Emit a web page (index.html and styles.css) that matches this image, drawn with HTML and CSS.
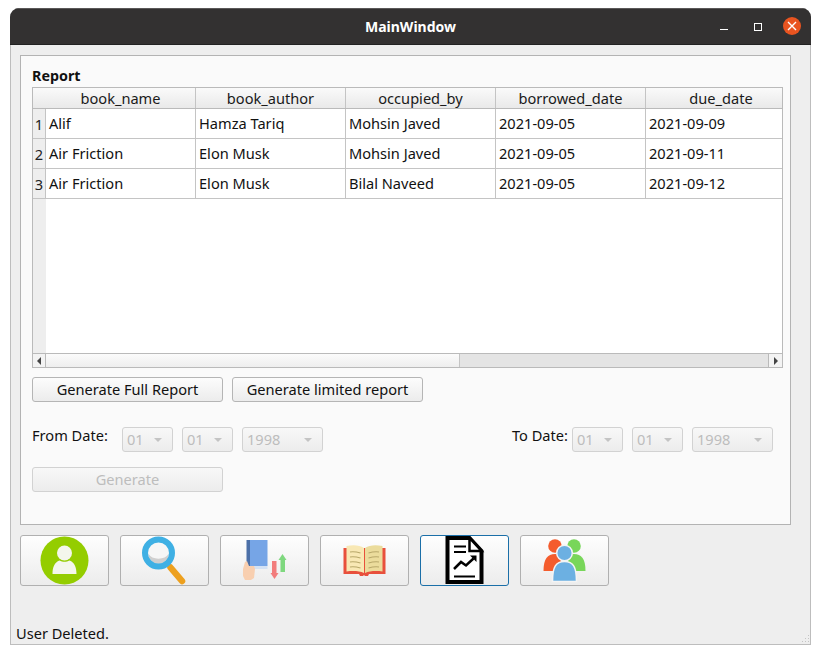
FILE: index.html
```html
<!DOCTYPE html>
<html lang="en">
<head>
<meta charset="utf-8">
<title>MainWindow</title>
<link rel="stylesheet" href="styles.css">
</head>
<body>
<div class="window">
  <header class="titlebar">
    <span class="title">MainWindow</span>
    <div class="controls">
      <span class="ctl-min"></span>
      <span class="ctl-max"></span>
      <span class="ctl-close"><svg width="10" height="10" viewBox="0 0 10 10"><path d="M1 1L9 9M9 1L1 9" stroke="#fff" stroke-width="1.4" fill="none"/></svg></span>
    </div>
  </header>
  <main class="content">
    <section class="panel">
      <div class="panel-title">Report</div>
      <div class="table">
        <div class="thead">
          <div class="corner"></div>
          <div class="th w150">book_name</div>
          <div class="th w150">book_author</div>
          <div class="th w150">occupied_by</div>
          <div class="th w150">borrowed_date</div>
          <div class="th w150 th-last">due_date</div>
        </div>
        <div class="tbody">
          <div class="row">
            <div class="rh">1</div>
            <div class="td w150">Alif</div>
            <div class="td w150">Hamza Tariq</div>
            <div class="td w150">Mohsin Javed</div>
            <div class="td w150">2021-09-05</div>
            <div class="td wlast">2021-09-09</div>
          </div>
          <div class="row">
            <div class="rh">2</div>
            <div class="td w150">Air Friction</div>
            <div class="td w150">Elon Musk</div>
            <div class="td w150">Mohsin Javed</div>
            <div class="td w150">2021-09-05</div>
            <div class="td wlast">2021-09-11</div>
          </div>
          <div class="row">
            <div class="rh">3</div>
            <div class="td w150">Air Friction</div>
            <div class="td w150">Elon Musk</div>
            <div class="td w150">Bilal Naveed</div>
            <div class="td w150">2021-09-05</div>
            <div class="td wlast">2021-09-12</div>
          </div>
          <div class="empty"><div class="rh-fill"></div></div>
        </div>
        <div class="hscroll">
          <div class="sb-btn"><span class="arrow-left"></span></div>
          <div class="sb-thumb"></div>
          <div class="sb-trough"></div>
          <div class="sb-btn sb-btn-right"><span class="arrow-right"></span></div>
        </div>
      </div>
      <div class="actions">
        <button class="btn">Generate Full Report</button>
        <button class="btn">Generate limited report</button>
      </div>
      <div class="dates">
        <div class="date-group">
          <span class="date-label from-label">From Date:</span>
          <div class="combo c51"><span>01</span><i></i></div>
          <div class="combo c51"><span>01</span><i></i></div>
          <div class="combo c81"><span>1998</span><i></i></div>
        </div>
        <div class="date-group">
          <span class="date-label to-label">To Date:</span>
          <div class="combo c51"><span>01</span><i></i></div>
          <div class="combo c51"><span>01</span><i></i></div>
          <div class="combo c81"><span>1998</span><i></i></div>
        </div>
      </div>
      <button class="btn btn-disabled" disabled>Generate</button>
    </section>
    <nav class="toolbar">
      <button class="tool" aria-label="Users">
        <svg width="50" height="50" viewBox="0 0 50 50"><circle cx="24.500" cy="24.500" r="24" fill="#94cd00"/><circle cx="24.500" cy="17" r="7.500" fill="#f4f6ec"/><path d="M12.500 38c0-7 2-11.500 7-13.500 3 1.800 7 1.800 10 0 5 2 7 6.500 7 13.500z" fill="#f4f6ec"/></svg>
      </button>
      <button class="tool" aria-label="Search">
        <svg width="50" height="50" viewBox="0 0 50 50"><path d="M30.500 31.500l11.500 13.500" stroke="#eda01e" stroke-width="6.500" stroke-linecap="round" fill="none"/><circle cx="18.500" cy="17" r="12" fill="#f6f6f6"/><path d="M8.500 18a10 10 0 0 0 20 0a11 8 0 0 1-20 0z" fill="#cfcfcf"/><circle cx="18.500" cy="17" r="13.500" fill="none" stroke="#3fb0e4" stroke-width="6"/></svg>
      </button>
      <button class="tool" aria-label="Borrow and return">
        <svg width="50" height="50" viewBox="0 0 50 50"><rect x="6.500" y="4" width="4" height="28" fill="#4c70a8"/><rect x="10" y="4" width="17.500" height="26" fill="#76a5e6"/><rect x="11" y="30" width="16.500" height="3" fill="#d4e2f4"/><path d="M3 33l2-7 2-1 2 5h5l1 3-1 9-3 2H5l-2-4z" fill="#f8cfb0"/><rect x="32" y="25" width="4.500" height="13" fill="#f27c7c"/><path d="M30.500 37h8l-4 6z" fill="#f27c7c"/><rect x="40.500" y="23" width="4.500" height="13" fill="#7fd87f"/><path d="M38.500 24h8l-4-6z" fill="#7fd87f"/></svg>
      </button>
      <button class="tool" aria-label="Books">
        <svg width="50" height="50" viewBox="0 0 50 50"><path d="M3.500 12h42v26H29l-1 2h-3l-1-1-1 1h-3l-1-2H3.500z" fill="#e8503c"/><path d="M6.500 10c7-1.500 13-1 17.500 2v25c-4.500-2-11-2.500-17.500-1.500z" fill="#f8e8b4"/><path d="M42.500 10c-7-1.500-13-1-17.500 2v25c4.500-2 11-2.500 17.500-1.500z" fill="#ebdc9c"/><path d="M10 16c3.500-.5 7 0 10.500 1M10 21c3.500-.5 7 0 10.500 1M10 26c3.500-.5 7 0 10.500 1M10 31c3.500-.5 7 0 10.500 1M39 16c-3.500-.5-7 0-10.500 1M39 21c-3.500-.5-7 0-10.500 1M39 26c-3.500-.5-7 0-10.500 1M39 31c-3.500-.5-7 0-10.500 1" stroke="#b8a86a" stroke-width="1.100" fill="none"/></svg>
      </button>
      <button class="tool tool-active" aria-label="Report">
        <svg width="50" height="50" viewBox="0 0 50 50"><path d="M7.500 2h22l12 13v31h-34z" fill="#fff" stroke="#000" stroke-width="4"/><path d="M29.500 2v13h12z" fill="#fff" stroke="#000" stroke-width="2.500"/><path d="M14 10.500h12M14 16h12M14 40.500h21" stroke="#000" stroke-width="2.200" fill="none"/><path d="M14 33l7-7 5 3.500 7.500-7" stroke="#000" stroke-width="2.500" fill="none"/><path d="M30 19.500h6.500v6.500z" fill="#000"/></svg>
      </button>
      <button class="tool" aria-label="Members">
        <svg width="50" height="50" viewBox="0 0 50 50"><circle cx="15" cy="10" r="6.800" fill="#f45c2d"/><circle cx="34" cy="10" r="6.800" fill="#78d65a"/><path d="M3.500 35c0-12 4-17 11.500-17s11.500 5 11.500 17z" fill="#f45c2d"/><path d="M22.500 35c0-12 4-17 11.500-17s11.500 5 11.500 17z" fill="#78d65a"/><path d="M12.500 45.500c0-15 3.500-20 12-20s12 5 12 20z" fill="#6cb0e2" stroke="#f4f4f4" stroke-width="1.500"/><circle cx="24.500" cy="17" r="7.800" fill="#6cb0e2" stroke="#f4f4f4" stroke-width="1.500"/></svg>
      </button>
    </nav>
    <footer class="status">
      <span>User Deleted.</span>
      <svg class="grip" width="10" height="10" viewBox="0 0 10 10"><path d="M8 1h1v1H8zM5 4h1v1H5zM8 4h1v1H8zM2 7h1v1H2zM5 7h1v1H5zM8 7h1v1H8z" fill="#c4c4c4"/></svg>
    </footer>
  </main>
</div>
</body>
</html>
```

FILE: styles.css
```css
* { box-sizing: border-box; }
html, body { margin: 0; padding: 0; background: #fff; }
body {
  width: 820px;
  height: 655px;
  padding: 8px 9px 10px 10px;
  font-family: "Noto Sans", "Open Sans", sans-serif;
  font-size: 14.6px;
  color: #111;
}
.window {
  height: 637px;
  display: flex;
  flex-direction: column;
  border-radius: 9px 9px 0 0;
  overflow: hidden;
  background: #eeeeee;
}
.titlebar {
  height: 37px;
  flex: none;
  background: #333131;
  border-top: 1px solid #5a5858;
  border-bottom: 1px solid #222;
  display: flex;
  align-items: center;
  justify-content: center;
  position: relative;
}
.title { color: #fff; font-weight: 700; font-size: 14px; }
.controls { position: absolute; inset: 0; }
.ctl-min { position: absolute; left: 710px; top: 20px; width: 8px; height: 1px; background: #fff; }
.ctl-max { position: absolute; left: 744px; top: 14px; width: 8px; height: 8px; border: 1px solid #fff; }
.ctl-close {
  position: absolute; left: 773px; top: 8px; width: 18px; height: 18px; border-radius: 50%;
  background: #e95420; display: flex; align-items: center; justify-content: center;
}
.content {
  flex: 1;
  display: flex;
  flex-direction: column;
  padding: 10px 19px 0 9px;
  min-height: 0;
  border: 1px solid #bdbdbd;
  border-top: 0;
}
.panel {
  height: 470px;
  flex: none;
  background: #fafafa;
  border: 1px solid #b3b3b3;
  padding: 11px 7px 0 11px;
}
.panel-title { font-weight: 700; font-size: 14.3px; line-height: 17px; height: 20px; color: #111; }
.table {
  width: 751px;
  height: 281px;
  border: 1px solid #bababa;
  background: #fff;
  display: flex;
  flex-direction: column;
  overflow: hidden;
}
.thead {
  height: 21px;
  flex: none;
  display: flex;
  background: linear-gradient(#fafafa, #e9e9e9);
  border-bottom: 1px solid #bababa;
}
.corner { width: 13px; flex: none; }
.th {
  flex: none;
  text-align: center;
  line-height: 21px;
  border-right: 1px solid #c4c4c4;
  color: #1a1a1a;
}
.th-last { border-right: 0; }
.w150 { width: 150px; }
.wlast { width: 136px; }
.tbody { flex: 1; display: flex; flex-direction: column; min-height: 0; }
.row { height: 30px; flex: none; display: flex; border-bottom: 1px solid #c4c4c4; }
.rh {
  width: 13px;
  flex: none;
  background: #eeeeee;
  border-right: 1px solid #c4c4c4;
  text-align: center;
  line-height: 31px;
  color: #222;
}
.td {
  flex: none;
  padding-left: 3px;
  line-height: 28px;
  border-right: 1px solid #c4c4c4;
  color: #111;
}
.td.wlast { border-right: 0; }
.empty { flex: 1; display: flex; }
.rh-fill { width: 13px; background: #eeeeee; }
.hscroll {
  flex: none;
  display: flex;
  border-top: 1px solid #bababa;
  height: 14px;
}
.sb-btn {
  width: 13px;
  flex: none;
  background: #f3f3f3;
  border-right: 1px solid #bababa;
  display: flex;
  align-items: center;
  justify-content: center;
}
.sb-btn-right { width: 14px; border-right: 0; border-left: 1px solid #bababa; }
.arrow-left { width: 0; height: 0; border: 4px solid transparent; border-left: 0; border-right: 4px solid #444; }
.arrow-right { width: 0; height: 0; border: 4px solid transparent; border-right: 0; border-left: 4px solid #444; }
.sb-thumb { width: 414px; flex: none; background: linear-gradient(#fbfbfb, #eeeeee); border-right: 1px solid #c4c4c4; }
.sb-trough { flex: 1; background: #e4e4e4; }
.actions { display: flex; gap: 9px; margin-top: 9px; }
.btn {
  width: 191px;
  height: 25px;
  padding: 0 0 2px;
  font: inherit;
  color: #111;
  background: linear-gradient(#fcfcfc, #ececec);
  border: 1px solid #b5b5b5;
  border-radius: 3px;
  text-align: center;
}
.btn-disabled { color: #bdbdbd; border-color: #d2d2d2; background: linear-gradient(#f8f8f8, #ececec); display: block; margin-top: 15px; }
.dates {
  display: flex;
  justify-content: space-between;
  margin-top: 25px;
  padding-right: 10px;
}
.date-group { display: flex; gap: 9px; }
.date-label { line-height: 16px; color: #111; }
.from-label { width: 81px; }
.to-label { margin-right: -5px; width: 56px; white-space: nowrap; }
.combo {
  height: 25px;
  border: 1px solid #d2d2d2;
  border-radius: 3px;
  background: linear-gradient(#f8f8f8, #ececec);
  color: #bdbdbd;
  display: flex;
  align-items: center;
  justify-content: space-between;
  padding: 0 10px 2px 4px;
}
.combo i { width: 0; height: 0; border: 4px solid transparent; border-bottom: 0; border-top: 4px solid #c4c4c4; margin-top: 2px; }
.c51 { width: 51px; }
.c81 { width: 81px; }
.toolbar { display: flex; gap: 11px; margin-top: 10px; flex: none; }
.tool {
  width: 89px;
  height: 51px;
  padding: 0;
  background: linear-gradient(#fefefe, #ececec);
  border: 1px solid #b0b0b0;
  border-radius: 3px;
  display: flex;
  align-items: center;
  justify-content: center;
}
.tool-active { border-color: #1b6fa8; }
.status {
  flex: 1;
  display: flex;
  align-items: flex-end;
  justify-content: space-between;
  margin: 0 -19px 0 -4px;
  line-height: 20px;
  color: #111;
}
.status span { margin-bottom: 1px; }
.grip { display: block; }
```
